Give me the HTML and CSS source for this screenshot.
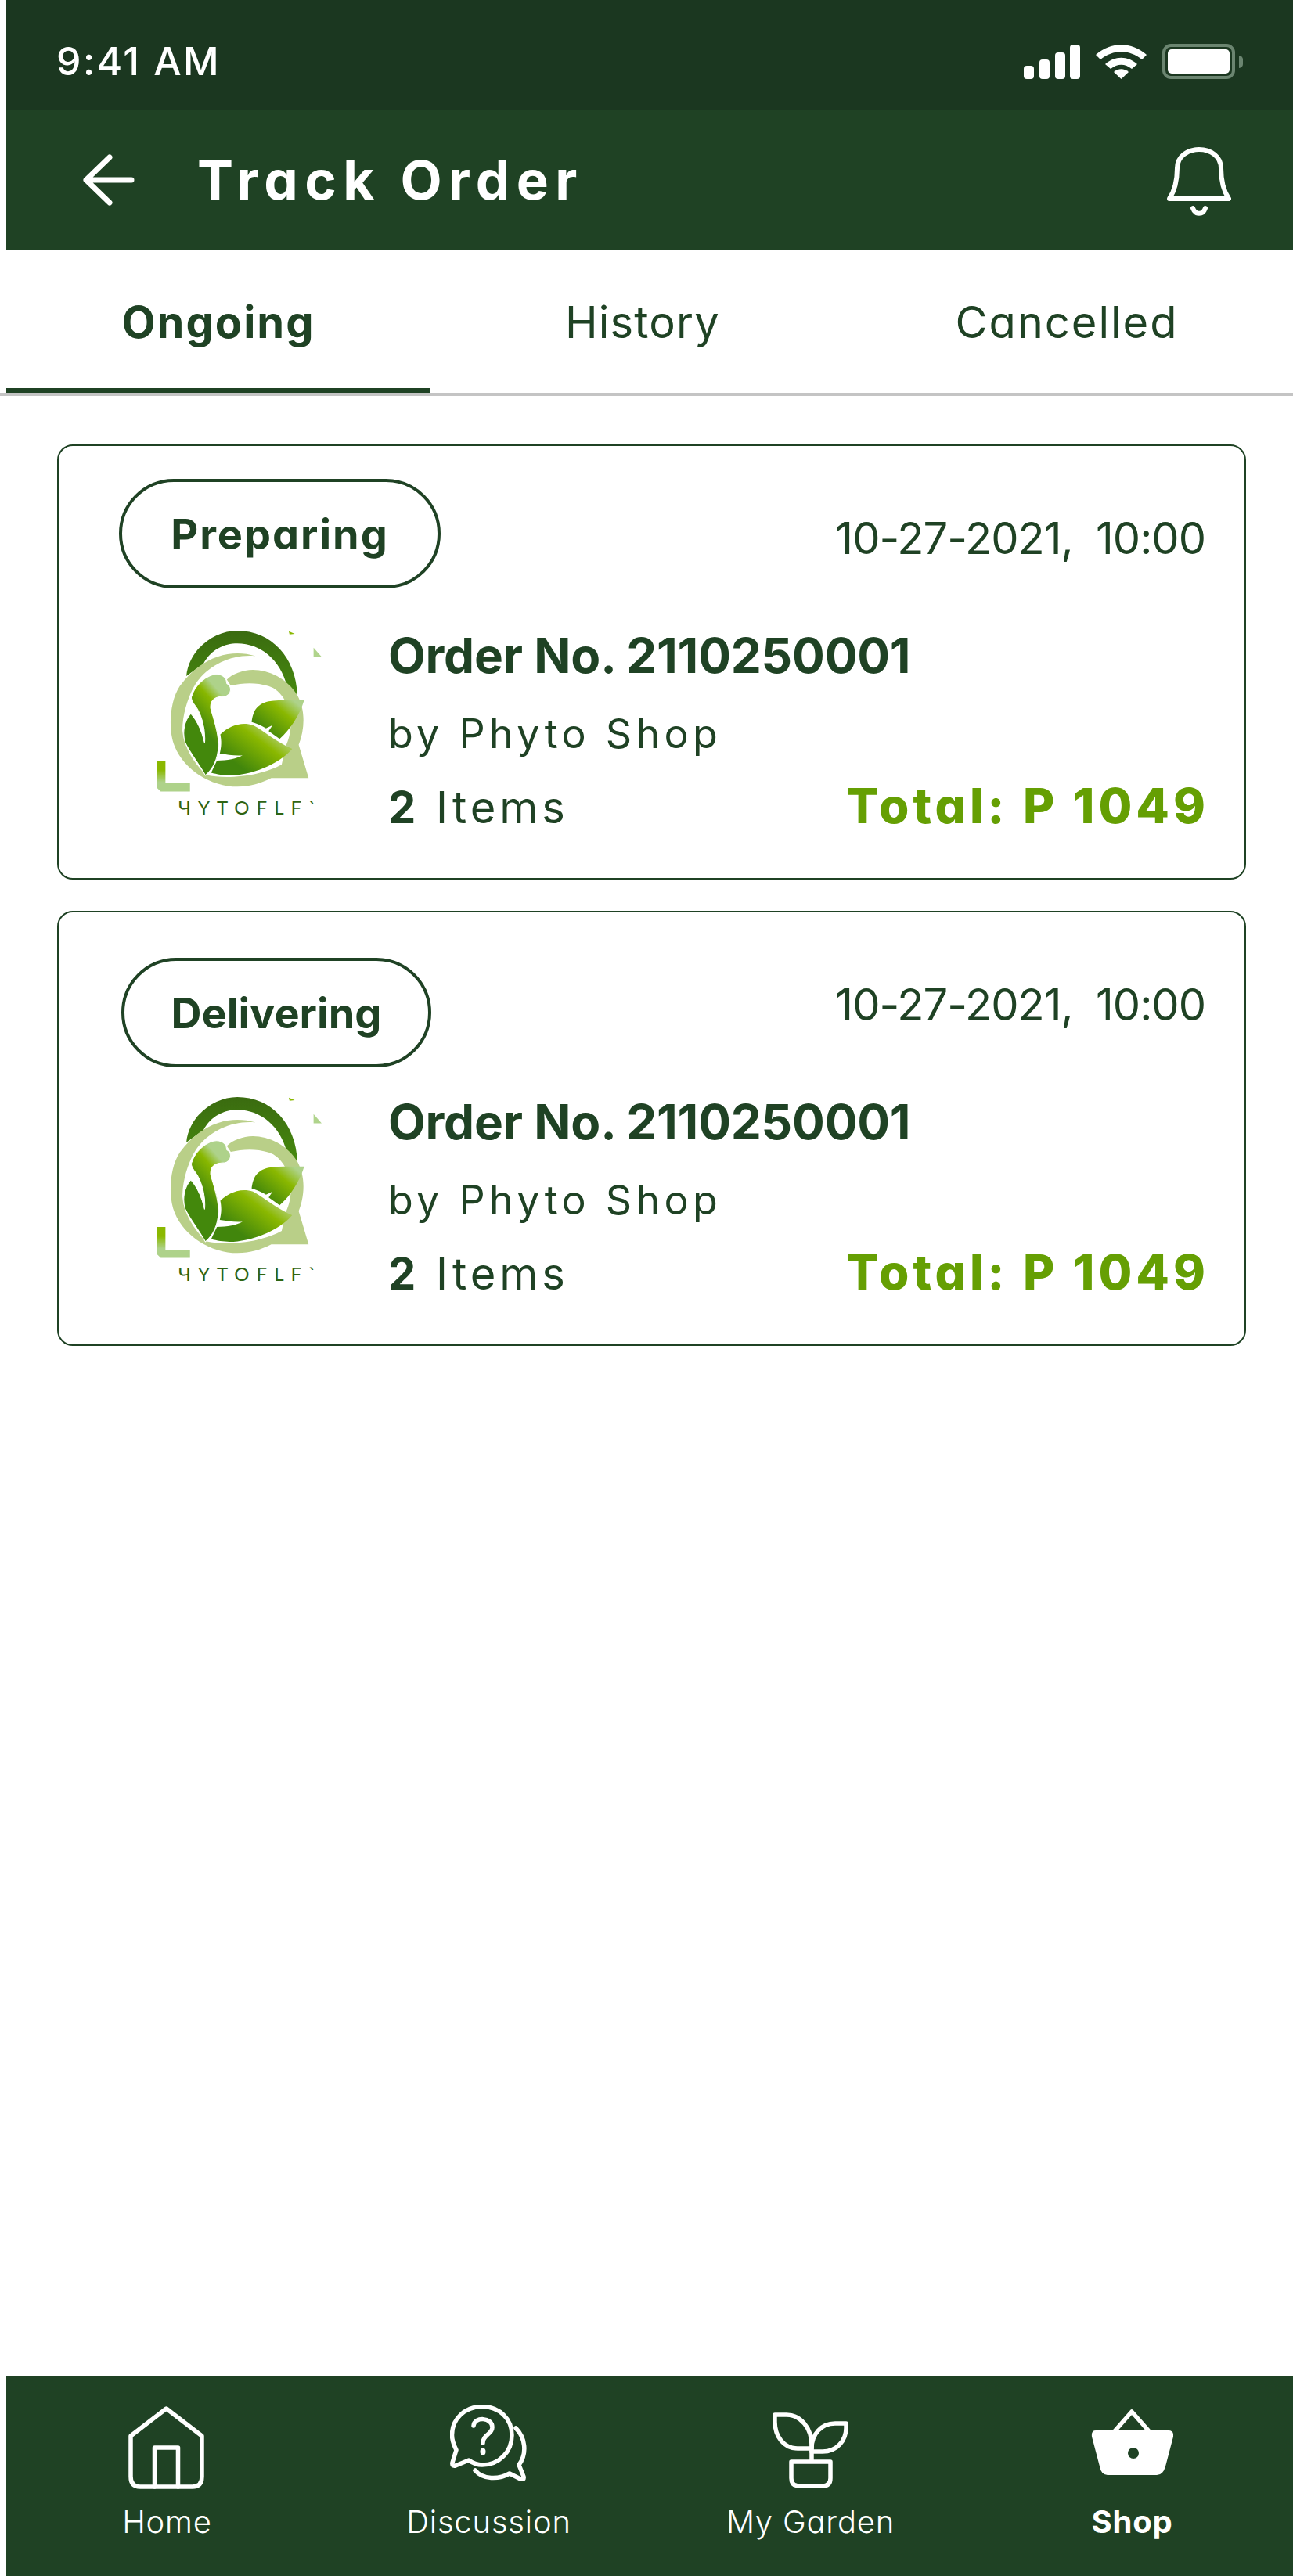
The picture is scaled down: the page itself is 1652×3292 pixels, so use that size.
FILE: index.html
```html
<!DOCTYPE html>
<html>
<head>
  <title>Track Order</title>
  <meta name="viewport" content="width=device-width, initial-scale=1.0">
  <link rel="stylesheet" href="styles.css">
</head>
<body>
  <div class="app">
    <div class="status-bar">
      <span class="time">9:41 AM</span>
      <div class="status-icons">
        <svg class="signal" width="72" height="44" viewBox="0 0 72 44"><rect x="0" y="27" width="13" height="17" rx="4"/><rect x="20" y="19" width="13" height="25" rx="4"/><rect x="40" y="10" width="13" height="34" rx="4"/><rect x="59" y="0" width="13" height="44" rx="4"/></svg>
        <svg class="wifi" width="65" height="44" viewBox="0 0 65 44"><path d="M0 13 C19 -4 46 -4 65 13 L59 19 C43 6 22 6 6 19 Z"/><path d="M12 25 C24 14 41 14 53 25 L46 31 C37 24 28 24 19 31 Z"/><path d="M23 35 C29 30 36 30 42 35 L32.5 44 Z"/></svg>
        <div class="battery"><div class="battery-fill"></div></div>
        <div class="battery-nub"></div>
      </div>
    </div>

    <div class="top-bar">
      <svg class="back" width="66" height="66" viewBox="0 0 66 66"><path d="M4 33 H62 M34 4 L4 33 L34 62"/></svg>
      <h1 class="title">Track Order</h1>
      <svg class="bell" width="82" height="90" viewBox="0 0 82 90"><path d="M3 66 C11 54 13 42 13 27 C13 12 26 3 41 3 C56 3 69 12 69 27 C69 42 71 54 79 66 Z"/><path d="M33 78 C36 87 46 87 49 78"/></svg>
    </div>

    <div class="tabs">
      <div class="tab active">Ongoing</div>
      <div class="tab tab-history">History</div>
      <div class="tab">Cancelled</div>
    </div>

    <div class="orders">
      <div class="card">
        <div class="card-top">
          <div class="pill pill-preparing">Preparing</div>
          <div class="date">10-27-2021,&nbsp; 10:00</div>
        </div>
        <div class="card-body">
          <svg class="logo" width="227" height="247" viewBox="400 720 680 740">
            <defs>
              <linearGradient id="arc" x1="0" y1="0" x2="0" y2="1"><stop offset="0" stop-color="#3a6b10"/><stop offset="1" stop-color="#46890e"/></linearGradient>
              <linearGradient id="stem" x1="0.75" y1="0.08" x2="0.4" y2="0.75"><stop offset="0.1" stop-color="#aed28a"/><stop offset="0.3" stop-color="#88b700"/><stop offset="0.75" stop-color="#43880c"/></linearGradient>
              <linearGradient id="leafTop" x1="0.1" y1="0.85" x2="0.95" y2="0.1"><stop offset="0.1" stop-color="#41860c"/><stop offset="0.65" stop-color="#8ab800"/><stop offset="0.95" stop-color="#aed28a"/></linearGradient>
              <linearGradient id="leafBig" x1="0.15" y1="0.85" x2="0.8" y2="0.3"><stop offset="0.2" stop-color="#41860c"/><stop offset="0.8" stop-color="#8ab800"/><stop offset="1" stop-color="#a5c850"/></linearGradient>
              <linearGradient id="corner" x1="0" y1="0" x2="0" y2="1"><stop offset="0.3" stop-color="#8ab800"/><stop offset="0.7" stop-color="#aed28a"/></linearGradient>
            </defs>
            <path fill="url(#arc)" d="M535 912 C545 810 640 738 730 738 C860 738 955 840 960 985 L920 950 C895 850 820 787 730 787 C680 787 630 810 600 865 Z"/>
            <path fill="#b9cf88" d="M800 835 C700 805 590 840 510 950 C470 1010 465 1120 490 1180 C530 1280 640 1335 730 1335 C780 1335 820 1322 860 1302 L1003 1302 L965 1175 C990 1110 990 1040 960 985 C920 920 850 888 790 888 C750 888 710 905 690 925 L705 948 C750 938 800 935 850 950 C900 965 935 1030 935 1090 C935 1130 925 1160 915 1180 L900 1250 C830 1290 700 1310 610 1290 C560 1240 525 1180 520 1120 C520 1060 540 1000 560 960 C600 880 700 825 800 835 Z"/>
            <path fill="url(#stem)" stroke="#fff" stroke-width="3" d="M555 990 C570 940 620 905 650 905 C680 905 690 925 690 940 C710 950 710 985 680 990 C650 990 625 1000 628 1035 C640 1080 660 1130 658 1180 C655 1230 640 1265 608 1292 C585 1250 545 1200 530 1165 C520 1130 525 1085 552 1055 C575 1080 595 1125 605 1168 C610 1110 590 1050 565 1020 C555 1005 553 995 555 990 Z"/>
            <path fill="url(#leafTop)" d="M986 1004 C970 1060 930 1120 892 1152 L850 1122 L865 1100 L840 1112 C820 1100 800 1092 785 1088 C790 1050 800 1020 850 1008 C890 1002 940 1004 986 1004 Z"/>
            <path fill="url(#leafBig)" d="M665 1135 C700 1100 750 1085 790 1100 C830 1120 880 1165 940 1190 C890 1250 780 1292 700 1292 C680 1292 650 1288 630 1282 L652 1235 C690 1235 730 1228 750 1215 C725 1218 690 1212 663 1208 C670 1180 670 1160 665 1135 Z"/>
            <path fill="url(#corner)" d="M423 1235 H455 V1322 H549 V1354 H437 L423 1340 Z"/>
            <path fill="#8ab800" d="M927 740 L950 750 L930 752 Z"/>
            <path fill="#b0d48c" d="M1022 803 L1053 838 L1022 838 Z"/>
            <text class="logo-text" x="505" y="1441">ЧYTOFLF`</text>
          </svg>
          <div class="info">
            <div class="order-no">Order No. 2110250001</div>
            <div class="shop-name">by Phyto Shop</div>
            <div class="info-bottom">
              <div class="items"><b>2</b> Items</div>
              <div class="total">Total: P 1049</div>
            </div>
          </div>
        </div>
      </div>

      <div class="card">
        <div class="card-top">
          <div class="pill pill-delivering">Delivering</div>
          <div class="date">10-27-2021,&nbsp; 10:00</div>
        </div>
        <div class="card-body">
          <svg class="logo" width="227" height="247" viewBox="400 720 680 740">
            <path fill="url(#arc)" d="M535 912 C545 810 640 738 730 738 C860 738 955 840 960 985 L920 950 C895 850 820 787 730 787 C680 787 630 810 600 865 Z"/>
            <path fill="#b9cf88" d="M800 835 C700 805 590 840 510 950 C470 1010 465 1120 490 1180 C530 1280 640 1335 730 1335 C780 1335 820 1322 860 1302 L1003 1302 L965 1175 C990 1110 990 1040 960 985 C920 920 850 888 790 888 C750 888 710 905 690 925 L705 948 C750 938 800 935 850 950 C900 965 935 1030 935 1090 C935 1130 925 1160 915 1180 L900 1250 C830 1290 700 1310 610 1290 C560 1240 525 1180 520 1120 C520 1060 540 1000 560 960 C600 880 700 825 800 835 Z"/>
            <path fill="url(#stem)" stroke="#fff" stroke-width="3" d="M555 990 C570 940 620 905 650 905 C680 905 690 925 690 940 C710 950 710 985 680 990 C650 990 625 1000 628 1035 C640 1080 660 1130 658 1180 C655 1230 640 1265 608 1292 C585 1250 545 1200 530 1165 C520 1130 525 1085 552 1055 C575 1080 595 1125 605 1168 C610 1110 590 1050 565 1020 C555 1005 553 995 555 990 Z"/>
            <path fill="url(#leafTop)" d="M986 1004 C970 1060 930 1120 892 1152 L850 1122 L865 1100 L840 1112 C820 1100 800 1092 785 1088 C790 1050 800 1020 850 1008 C890 1002 940 1004 986 1004 Z"/>
            <path fill="url(#leafBig)" d="M665 1135 C700 1100 750 1085 790 1100 C830 1120 880 1165 940 1190 C890 1250 780 1292 700 1292 C680 1292 650 1288 630 1282 L652 1235 C690 1235 730 1228 750 1215 C725 1218 690 1212 663 1208 C670 1180 670 1160 665 1135 Z"/>
            <path fill="url(#corner)" d="M423 1235 H455 V1322 H549 V1354 H437 L423 1340 Z"/>
            <path fill="#8ab800" d="M927 740 L950 750 L930 752 Z"/>
            <path fill="#b0d48c" d="M1022 803 L1053 838 L1022 838 Z"/>
            <text class="logo-text" x="505" y="1441">ЧYTOFLF`</text>
          </svg>
          <div class="info">
            <div class="order-no">Order No. 2110250001</div>
            <div class="shop-name">by Phyto Shop</div>
            <div class="info-bottom">
              <div class="items"><b>2</b> Items</div>
              <div class="total">Total: P 1049</div>
            </div>
          </div>
        </div>
      </div>
    </div>

    <div class="bottom-nav">
      <div class="nav-item">
        <div class="nav-icon">
          <svg class="icon-home" width="97" height="106" viewBox="0 0 97 106"><path d="M48.5 3 L94 38 V90 Q94 103 82 103 H15 Q3 103 3 90 V38 Z"/><path d="M33.5 103 V53 H63.5 V103"/></svg>
        </div>
        <span>Home</span>
      </div>
      <div class="nav-item">
        <div class="nav-icon">
          <svg width="100" height="98" viewBox="0 0 100 98"><path d="M8 58 L3 74 Q2 79 7 78 L24 71 Q32 77 41 77 C63 77 79 60 79 39 C79 18 63 2.500 41 2.500 C19 2.500 2.500 18 2.500 39 C2.500 46 5 52 8 58 Z"/><path d="M84 30 C96 42 99 62 88 77 L94 92 Q95 97 90 95 L76 88 C62 96 42 96 32 84"/><path d="M30 27 C31 15 54 16 54 29 C54 38 42 38 42 49"/><ellipse class="solid" cx="42" cy="60" rx="3.500" ry="4.500"/></svg>
        </div>
        <span>Discussion</span>
      </div>
      <div class="nav-item">
        <div class="nav-icon">
          <svg class="icon-garden" width="97" height="97" viewBox="0 0 97 97"><path d="M3 3 H18 C36 3 50 20 50 42 V46 H32 C14 46 3 30 3 12 Z"/><path d="M94 14 H80 C62 14 50 28 50 46 V50 H64 C82 50 94 36 94 20 Z"/><path d="M50 50 V62"/><path d="M24 63 H74 V84 Q74 94 64 94 H34 Q24 94 24 84 Z"/></svg>
        </div>
        <span>My Garden</span>
      </div>
      <div class="nav-item nav-active">
        <div class="nav-icon">
          <svg class="icon-shop" width="105" height="84" viewBox="0 0 105 84"><path d="M30 28 L52 3 L74 28"/><path class="solid" d="M6 27 H99 Q106 27 105 35 L95 73 Q92 84 84 84 H21 Q13 84 11 73 L1 35 Q0 27 6 27 Z"/><ellipse class="hole" cx="54" cy="56" rx="7" ry="7"/></svg>
        </div>
        <span>Shop</span>
      </div>
    </div>
  </div>
</body>
</html>
```

FILE: styles.css
```css
body {
  margin: 0;
  padding: 0;
  background: #fff;
  font-family: "Inter", "Liberation Sans", sans-serif;
  font-feature-settings: "cv11";
  color: #1f4224;
}
.app {
  display: flex;
  flex-direction: column;
  height: 3292px;
}

/* status bar */
.status-bar {
  height: 140px;
  margin-left: 8px;
  padding: 0 64px 0 64px;
  background: #1b3720;
  display: flex;
  align-items: center;
  justify-content: space-between;
  box-sizing: border-box;
}
.time {
  color: #fff;
  font-size: 50px;
  font-weight: 500;
  letter-spacing: 2.4px;
  margin-top: 16px;
}
.status-icons {
  display: flex;
  align-items: center;
  margin-top: 17px;
}
.status-icons svg {
  fill: #fff;
}
.signal {
  margin-right: 20px;
}
.wifi {
  margin-right: 20px;
}
.battery {
  width: 93px;
  height: 45px;
  box-sizing: border-box;
  border: 4px solid #6b8570;
  border-radius: 11px;
  padding: 3px;
}
.battery-fill {
  height: 100%;
  background: #fff;
  border-radius: 5px;
}
.battery-nub {
  width: 5px;
  height: 16px;
  margin-left: 5px;
  background: #6b8570;
  border-radius: 0 8px 8px 0;
}

/* header */
.top-bar {
  height: 180px;
  margin-left: 8px;
  background: #1f4224;
  display: flex;
  align-items: center;
  box-sizing: border-box;
  padding: 0 79px 0 98px;
}
.back path,
.bell path {
  fill: none;
  stroke: #fff;
  stroke-linecap: round;
  stroke-linejoin: round;
}
.back path {
  stroke-width: 7;
}
.bell path {
  stroke-width: 6;
}
.bell {
  margin-top: 6px;
}
.title {
  margin: 0 0 0 80px;
  color: #fff;
  font-size: 69px;
  font-weight: 700;
  letter-spacing: 8.4px;
  flex: 1;
}

/* tabs */
.tabs {
  height: 186px;
  box-sizing: border-box;
  padding-left: 8px;
  border-bottom: 4px solid #c4c4c4;
  display: grid;
  grid-template-columns: repeat(3, 542px);
}
.tab {
  display: flex;
  align-items: center;
  justify-content: center;
  padding-top: 8px;
  font-size: 56px;
  font-weight: 400;
  letter-spacing: 2px;
  border-bottom: 6px solid transparent;
}
.tab-history {
  letter-spacing: 1.2px;
}
.tab.active {
  font-weight: 700;
  border-bottom-color: #1f4224;
}

/* order cards */
.orders {
  padding: 62px 60px 0 73px;
  display: flex;
  flex-direction: column;
  gap: 40px;
}
.card {
  height: 556px;
  box-sizing: border-box;
  border: 2px solid #1f4224;
  border-radius: 20px;
}
.card-top {
  height: 230px;
  display: flex;
  justify-content: space-between;
  align-items: flex-start;
  padding-right: 50px;
}
.pill {
  height: 140px;
  box-sizing: border-box;
  border: 4px solid #1f4224;
  border-radius: 70px;
  display: flex;
  align-items: center;
  justify-content: center;
  font-size: 54px;
  font-weight: 700;
}
.pill-preparing {
  width: 411px;
  margin: 42px 0 0 77px;
  letter-spacing: 2px;
}
.pill-delivering {
  width: 396px;
  margin: 58px 0 0 80px;
  letter-spacing: 0;
}
.date {
  margin-top: 84px;
  font-size: 56px;
  line-height: 68px;
  letter-spacing: -1px;
}
.card-body {
  display: flex;
}
.logo {
  margin-left: 118px;
  flex: none;
}
.logo-text {
  font-family: "Lato", "Noto Sans", sans-serif;
  font-size: 72px;
  letter-spacing: 27px;
  fill: #2f6412;
}
.info {
  margin-left: 76px;
  padding-right: 45px;
  flex: 1;
}
.order-no {
  font-size: 62px;
  line-height: 76px;
  font-weight: 700;
  letter-spacing: -0.2px;
}
.shop-name {
  margin-top: 30px;
  font-size: 52px;
  line-height: 64px;
  letter-spacing: 5.3px;
}
.info-bottom {
  margin-top: 22px;
  display: flex;
  justify-content: space-between;
  align-items: baseline;
}
.items {
  font-size: 56px;
  letter-spacing: 5px;
}
.items b {
  font-weight: 700;
}
.total {
  color: #659f03;
  font-size: 62px;
  font-weight: 800;
  letter-spacing: 5px;
}

/* bottom nav */
.bottom-nav {
  margin-top: auto;
  margin-left: 8px;
  height: 256px;
  background: #1f4224;
  display: grid;
  grid-template-columns: repeat(4, 411px);
}
.nav-item {
  display: flex;
  flex-direction: column;
  align-items: center;
  padding-top: 37px;
  color: #fff;
  font-size: 40px;
  font-weight: 300;
  letter-spacing: 0.8px;
}
.nav-item.nav-active {
  font-weight: 700;
}
.nav-icon {
  height: 108px;
  display: flex;
  align-items: flex-start;
  margin-bottom: 17px;
}
.icon-home {
  margin: 2px 2px 0 0;
}
.icon-garden {
  margin-top: 10px;
}
.icon-shop {
  margin-top: 6px;
}
.nav-icon svg path,
.nav-icon svg ellipse {
  fill: none;
  stroke: #fff;
  stroke-width: 5.5;
  stroke-linecap: round;
  stroke-linejoin: round;
}
.nav-icon svg .solid {
  fill: #fff;
  stroke: none;
}
.nav-icon svg .hole {
  fill: #1f4224;
  stroke: none;
}
```
